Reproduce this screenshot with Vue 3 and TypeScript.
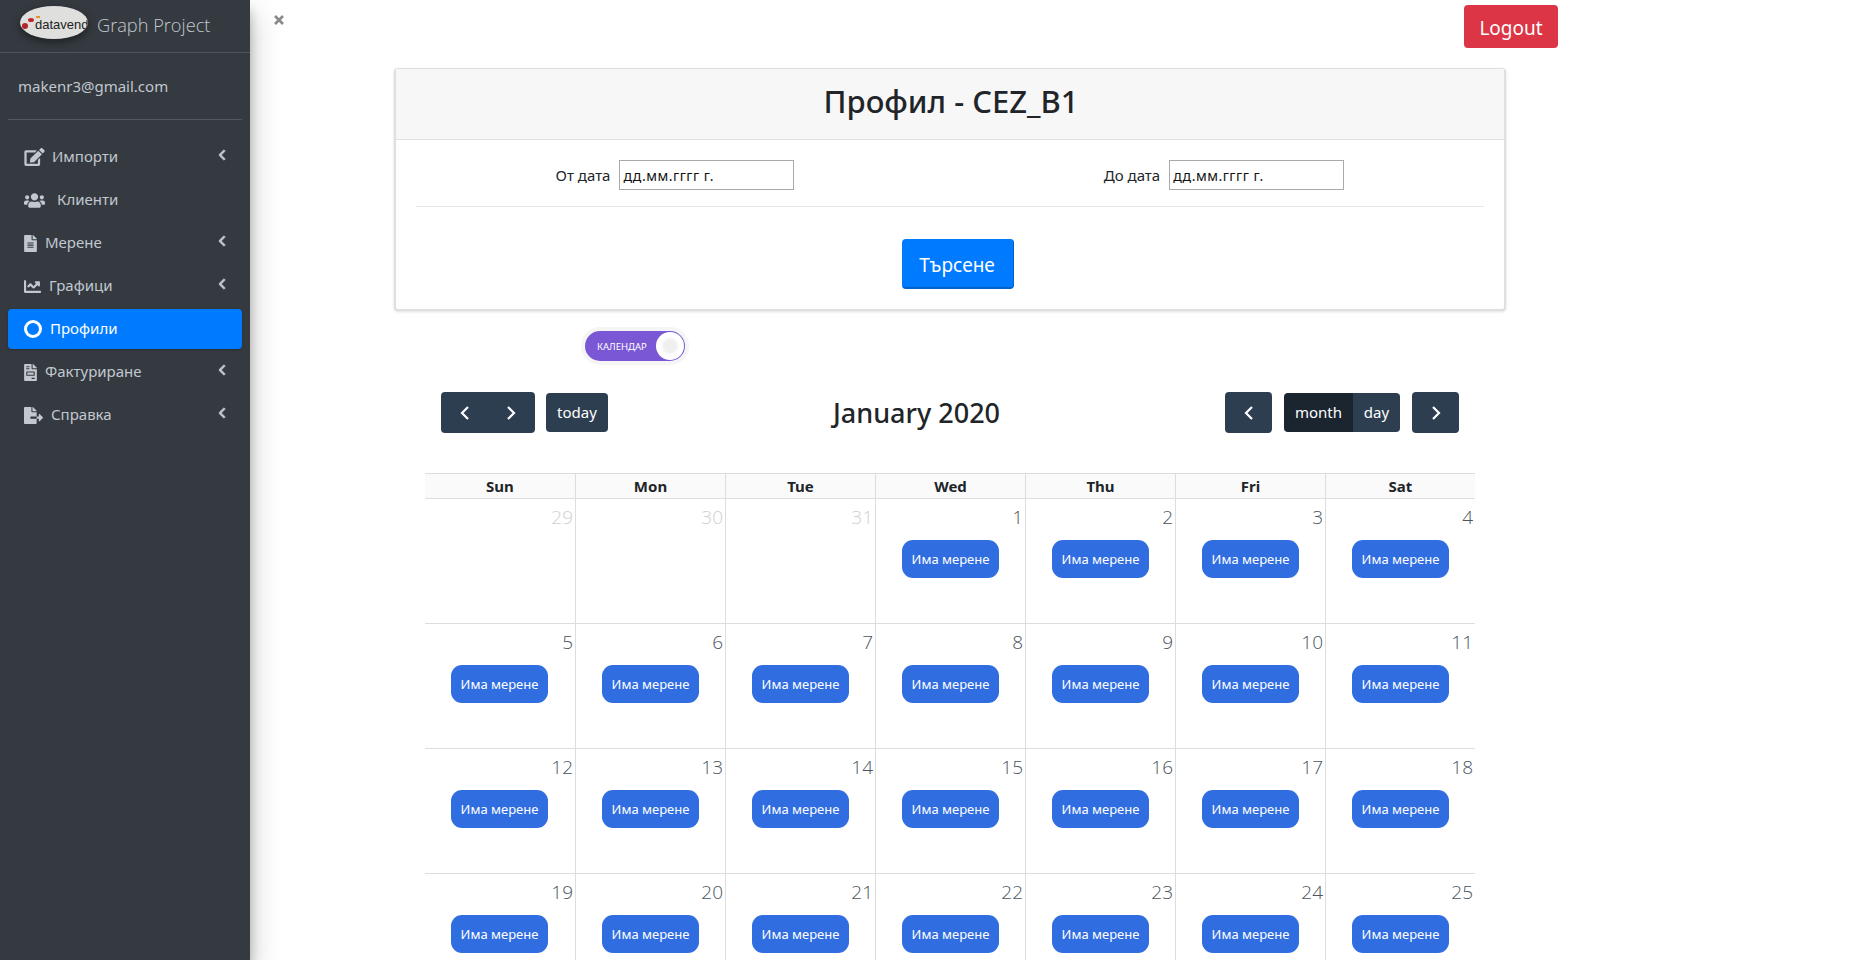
<script setup lang="ts">
type Nav = { label: string; icon: string; vb: string; w: number; h: number; gap: number; arrow: boolean; active?: boolean; ring?: boolean };

const chevL = 'M34.52 239.03L228.87 44.69c9.37-9.37 24.57-9.37 33.94 0l22.67 22.67c9.36 9.36 9.38 24.52.04 33.9L131.49 256l154.02 154.75c9.34 9.38 9.32 24.54-.04 33.9l-22.67 22.67c-9.37 9.37-24.57 9.37-33.94 0L34.52 272.97c-9.37-9.37-9.37-24.57 0-33.94z';

const fileAlt = 'M224 136V0H24C10.7 0 0 10.7 0 24v464c0 13.3 10.7 24 24 24h336c13.3 0 24-10.7 24-24V160H248c-13.2 0-24-10.8-24-24zm64 236c0 6.6-5.4 12-12 12H108c-6.6 0-12-5.4-12-12v-8c0-6.6 5.4-12 12-12h168c6.6 0 12 5.4 12 12v8zm0-64c0 6.6-5.4 12-12 12H108c-6.6 0-12-5.4-12-12v-8c0-6.6 5.4-12 12-12h168c6.6 0 12 5.4 12 12v8zm0-72v8c0 6.6-5.4 12-12 12H108c-6.6 0-12-5.4-12-12v-8c0-6.6 5.4-12 12-12h168c6.6 0 12 5.4 12 12zm96-114.1v6.1H256V0h6.1c6.4 0 12.5 2.5 17 7l97.9 98c4.5 4.5 7 10.6 7 16.9z';

const nav: Nav[] = [
  { label: 'Импорти', vb: '0 0 576 512', w: 21, h: 18, gap: 7, arrow: true, icon: 'M402.6 83.2l90.2 90.2c3.8 3.8 3.8 10 0 13.8L274.4 405.6l-92.8 10.3c-12.4 1.4-22.9-9.1-21.5-21.5l10.3-92.8L388.8 83.2c3.8-3.8 10-3.8 13.8 0zm162-22.9l-48.8-48.8c-15.2-15.2-39.9-15.2-55.2 0l-35.4 35.4c-3.8 3.8-3.8 10 0 13.8l90.2 90.2c3.8 3.8 10 3.8 13.8 0l35.4-35.4c15.2-15.3 15.2-40 0-55.2zM384 346.2V448H64V128h229.8c3.2 0 6.2-1.3 8.5-3.5l40-40c7.6-7.6 2.2-20.5-8.5-20.5H48C21.5 64 0 85.5 0 112v352c0 26.5 21.5 48 48 48h352c26.5 0 48-21.5 48-48V306.2c0-10.7-12.9-16-20.5-8.5l-40 40c-2.2 2.3-3.5 5.3-3.5 8.5z' },
  { label: 'Клиенти', vb: '0 0 640 512', w: 21, h: 17, gap: 12, arrow: false, icon: 'M96 224c35.3 0 64-28.7 64-64s-28.7-64-64-64-64 28.7-64 64 28.7 64 64 64zm448 0c35.3 0 64-28.7 64-64s-28.7-64-64-64-64 28.7-64 64 28.7 64 64 64zm32 32h-64c-17.6 0-33.5 7.1-45.1 18.6 40.3 22.1 68.9 62 75.1 109.4h66c17.7 0 32-14.3 32-32v-32c0-35.3-28.7-64-64-64zm-256 0c61.9 0 112-50.1 112-112S381.9 32 320 32 208 82.1 208 144s50.1 112 112 112zm76.8 32h-8.3c-20.8 10-43.9 16-68.5 16s-47.6-6-68.5-16h-8.3C179.6 288 128 339.6 128 403.2V432c0 26.5 21.5 48 48 48h288c26.5 0 48-21.5 48-48v-28.8c0-63.6-51.6-115.2-115.2-115.2zm-223.7-13.4C161.5 263.1 145.6 256 128 256H64c-35.3 0-64 28.7-64 64v32c0 17.7 14.3 32 32 32h65.9c6.3-47.4 34.9-87.3 75.2-109.4z' },
  { label: 'Мерене', vb: '0 0 384 512', w: 13, h: 17, gap: 8, arrow: true, icon: fileAlt },
  { label: 'Графици', vb: '0 0 512 512', w: 17, h: 17, gap: 8, arrow: true, icon: 'M496 384H64V80c0-8.84-7.16-16-16-16H16C7.16 64 0 71.16 0 80v336c0 17.67 14.33 32 32 32h464c8.84 0 16-7.16 16-16v-32c0-8.84-7.16-16-16-16zM464 96H345.94c-21.38 0-32.09 25.85-16.97 40.97l32.4 32.4L288 242.75l-73.37-73.37c-12.5-12.5-32.76-12.5-45.25 0l-68.69 68.69c-6.25 6.25-6.25 16.38 0 22.63l22.62 22.62c6.25 6.25 16.38 6.25 22.63 0L192 237.25l73.37 73.37c12.5 12.5 32.76 12.5 45.25 0l96-96 32.4 32.4c15.12 15.12 40.97 4.41 40.97-16.97V112c.01-8.84-7.15-16-15.99-16z' },
  { label: 'Профили', vb: '', w: 18, h: 18, gap: 8, arrow: false, active: true, ring: true, icon: '' },
  { label: 'Фактуриране', vb: '0 0 384 512', w: 13, h: 17, gap: 8, arrow: true, icon: 'M288 256H96v64h192v-64zm89-151L279.1 7c-4.5-4.5-10.6-7-17-7H256v128h128v-6.1c0-6.3-2.5-12.4-7-16.9zm-153 31V0H24C10.7 0 0 10.7 0 24v464c0 13.3 10.7 24 24 24h336c13.3 0 24-10.7 24-24V160H248c-13.2 0-24-10.8-24-24zM64 72c0-4.42 3.58-8 8-8h80c4.42 0 8 3.58 8 8v16c0 4.42-3.58 8-8 8H72c-4.42 0-8-3.58-8-8V72zm0 64c0-4.42 3.58-8 8-8h80c4.42 0 8 3.58 8 8v16c0 4.42-3.58 8-8 8H72c-4.42 0-8-3.58-8-8v-16zm256 304c0 4.42-3.58 8-8 8h-80c-4.42 0-8-3.58-8-8v-16c0-4.42 3.58-8 8-8h80c4.42 0 8 3.58 8 8v16zm0-200v96c0 8.84-7.16 16-16 16H80c-8.84 0-16-7.16-16-16v-96c0-8.84 7.16-16 16-16h224c8.84 0 16 7.16 16 16z' },
  { label: 'Справка', vb: '0 0 576 512', w: 19, h: 17, gap: 8, arrow: true, icon: 'M384 121.9c0-6.3-2.5-12.4-7-16.9L279.1 7c-4.5-4.5-10.6-7-17-7H256v128h128zM571 308l-95.7-96.4c-10.1-10.1-27.4-3-27.4 11.3V288h-64v64h64v65.2c0 14.3 17.3 21.4 27.4 11.3L571 332c6.6-6.6 6.6-17.4 0-24zm-379 28v-32c0-8.8 7.2-16 16-16h176V160H248c-13.2 0-24-10.8-24-24V0H24C10.7 0 0 10.7 0 24v464c0 13.3 10.7 24 24 24h336c13.3 0 24-10.7 24-24V352H208c-8.8 0-16-7.2-16-16z' },
];

const days = ['Sun', 'Mon', 'Tue', 'Wed', 'Thu', 'Fri', 'Sat'];

type Cell = { n: number; out: boolean };
const cells: Cell[] = [
  { n: 29, out: true }, { n: 30, out: true }, { n: 31, out: true },
  ...Array.from({ length: 25 }, (_, i) => ({ n: i + 1, out: false })),
];
</script>

<template>
  <div class="page">
    <aside class="sidebar">
      <div class="brand">
        <div class="logo">
          <span class="dot d1"></span><span class="dot d2"></span><span class="dot d3"></span>
          <span class="logo-text">datavend</span>
        </div>
        <span class="brand-name">Graph Project</span>
      </div>
      <div class="user">makenr3@gmail.com</div>
      <nav class="nav">
        <a v-for="item in nav" :key="item.label" class="nav-item" :class="{ active: item.active }">
          <span v-if="item.ring" class="ring"></span>
          <svg v-else class="nav-icon" :viewBox="item.vb" :width="item.w" :height="item.h" fill="currentColor"><path :d="item.icon" /></svg>
          <span class="nav-label" :style="{ marginLeft: item.gap + 'px' }">{{ item.label }}</span>
          <svg v-if="item.arrow" class="nav-arrow" viewBox="0 0 320 512" width="8" height="12" fill="currentColor" stroke="currentColor" stroke-width="30"><path :d="chevL" /></svg>
        </a>
      </nav>
    </aside>

    <main class="main">
      <div class="topbar">
        <svg class="close" viewBox="0 0 12 12" width="12" height="12"><path d="M2 2l8 8M10 2l-8 8" stroke="#8a8a8a" stroke-width="2.6" fill="none" /></svg>
        <button class="logout">Logout</button>
      </div>

      <div class="content">
        <section class="card">
          <header class="card-head"><h2>Профил - CEZ_B1</h2></header>
          <div class="card-body">
            <div class="filters">
              <label class="field first">От дата <input class="date" readonly value="дд.мм.гггг г." /></label>
              <label class="field second">До дата <input class="date" readonly value="дд.мм.гггг г." /></label>
            </div>
            <hr />
            <div class="search-row"><button class="search">Търсене</button></div>
          </div>
        </section>

        <div class="toggle-row">
          <div class="toggle">
            <span class="toggle-text">КАЛЕНДАР</span>
            <span class="knob"><span class="knob-in"></span></span>
          </div>
        </div>

        <section class="calendar">
          <div class="toolbar">
            <div class="tool-group left">
              <div class="btn-pair">
                <button class="cal-btn arrow-btn"><svg viewBox="0 0 12 16" width="12" height="16"><path d="M9 2L3 8l6 6" /></svg></button>
                <button class="cal-btn arrow-btn shift"><svg viewBox="0 0 12 16" width="12" height="16"><path d="M3 2l6 6-6 6" /></svg></button>
              </div>
              <button class="cal-btn text-btn">today</button>
            </div>
            <h2 class="cal-title">January 2020</h2>
            <div class="tool-group">
              <button class="cal-btn arrow-btn single"><svg viewBox="0 0 12 16" width="12" height="16"><path d="M9 2L3 8l6 6" /></svg></button>
              <div class="seg">
                <button class="seg-btn on">month</button>
                <button class="seg-btn">day</button>
              </div>
              <button class="cal-btn arrow-btn single"><svg viewBox="0 0 12 16" width="12" height="16"><path d="M3 2l6 6-6 6" /></svg></button>
            </div>
          </div>

          <div class="grid-head">
            <div v-for="d in days" :key="d" class="head-cell">{{ d }}</div>
          </div>
          <div class="grid-body">
            <div v-for="c in cells" :key="c.n + (c.out ? 'o' : '')" class="day">
              <div class="num" :class="{ out: c.out }">{{ c.n }}</div>
              <button v-if="!c.out" class="event">Има мерене</button>
            </div>
          </div>
        </section>
      </div>
    </main>
  </div>
</template>

<style>
html, body { margin: 0; padding: 0; background: #fff; overflow: hidden; }
</style>

<style scoped>
.page {
  display: flex;
  height: 960px;
  overflow: hidden;
  font-family: "Noto Sans", "Open Sans", sans-serif;
  color: #212529;
  background: #fff;
}
button { font-family: inherit; cursor: pointer; }

.sidebar {
  width: 250px;
  flex: none;
  background: #343a40;
  box-shadow: 0 14px 28px rgba(0,0,0,.25), 0 10px 10px rgba(0,0,0,.22);
  color: #c2c7d0;
  position: relative;
  z-index: 2;
}
.brand {
  height: 53px;
  box-sizing: border-box;
  border-bottom: 1px solid #4b545c;
  display: flex;
  align-items: center;
  padding: 0 0 3px 20px;
}
.logo {
  width: 68px;
  height: 33px;
  margin-top: 6px;
  align-self: flex-start;
  border-radius: 50%;
  background: #dfdfdd;
  box-shadow: 0 3px 8px rgba(0,0,0,.45);
  position: relative;
  overflow: hidden;
  flex: none;
}
.logo-text {
  position: absolute;
  left: 15px;
  top: 10px;
  font: 13px/18px "Liberation Sans", sans-serif;
  color: #222;
  white-space: nowrap;
}
.dot { position: absolute; border-radius: 50%; }
.d1 { left: 2px; top: 17px; width: 6px; height: 6px; background: #b3232c; }
.d2 { left: 8px; top: 12px; width: 6px; height: 4px; background: #c8262e; }
.d3 { left: 16px; top: 10px; width: 4px; height: 2px; border-radius: 0; background: #e8912c; }
.brand-name {
  margin-left: 9px;
  font-family: "Open Sans", "Noto Sans", sans-serif;
  font-size: 18.2px;
  font-weight: 300;
  color: #c4c8ce;
  white-space: nowrap;
}
.user {
  height: 67px;
  margin: 0 8px;
  padding-left: 10px;
  box-sizing: border-box;
  border-bottom: 1px solid #4f5962;
  display: flex;
  align-items: center;
  font-size: 15px;
  color: #c2c7d0;
}
.nav { padding: 17px 8px 0; display: flex; flex-direction: column; gap: 3px; }
.nav-item {
  height: 40px;
  display: flex;
  align-items: center;
  padding-left: 16px;
  border-radius: 4px;
  font-size: 15px;
  color: #c2c7d0;
  position: relative;
}
.nav-item.active { background: #007bff; color: #fff; box-shadow: 0 1px 3px rgba(0,0,0,.2); }
.nav-icon { flex: none; }
.nav-label { padding-bottom: 2px; }
.ring { width: 18px; height: 18px; box-sizing: border-box; border: 3px solid #fff; border-radius: 50%; flex: none; }
.nav-arrow { margin-left: auto; margin-right: 16px; margin-top: -4px; }

.main { flex: 1; min-width: 0; }
.topbar {
  width: 1308px;
  height: 68px;
  box-sizing: border-box;
  display: flex;
  justify-content: space-between;
  align-items: flex-start;
  padding-left: 23px;
}
.close { margin-top: 14px; }
.logout {
  margin-top: 5px;
  width: 94px;
  height: 43px;
  background: #dc3545;
  color: #fff;
  border: 0;
  border-radius: 4px;
  font-size: 19px;
  padding: 2px 0 0;
}

.content { margin-left: 144px; width: 1112px; }
.card {
  box-sizing: border-box;
  height: 243px;
  border: 2px solid #dfdfdf;
  border-top-width: 1px;
  border-radius: 4px;
  box-shadow: 0 1px 3px rgba(0,0,0,.12);
  background: #fff;
}
.card-head {
  height: 71px;
  box-sizing: border-box;
  background: #f7f7f7;
  border-bottom: 1px solid #dfdfdf;
  display: flex;
  align-items: center;
  justify-content: center;
  padding: 0 0 6px 2px;
}
.card-head h2 { margin: 0; font-size: 31px; font-weight: 500; color: #212529; }
.card-body { padding: 20px 20px 0; }
.filters { display: grid; grid-template-columns: 1fr 1fr; height: 30px; }
.field { display: flex; align-items: center; justify-content: center; gap: 9px; font-size: 15px; color: #212529; }
.field.first { padding-right: 16px; }
.field.second { padding-left: 14px; }
.date {
  width: 175px;
  height: 30px;
  box-sizing: border-box;
  border: 1px solid #a9a9a9;
  padding: 0 3px;
  font: 14px "Noto Sans", sans-serif;
  letter-spacing: .5px;
  color: #111;
  outline: none;
}
hr { margin: 16px 0 0; border: 0; border-top: 1px solid #e6e6e6; }
.search-row { display: flex; justify-content: center; padding: 32px 0 0 15px; }
.search {
  width: 112px;
  height: 50px;
  background: #007bff;
  color: #fff;
  border: 0;
  border-right: 1px solid #0062cc;
  border-bottom: 2px solid #0062cc;
  border-radius: 4px;
  font-size: 19px;
  padding: 4px 0 0;
}

.toggle-row { padding: 20px 0 0 191px; height: 80px; box-sizing: border-box; }
.toggle {
  width: 100px;
  height: 30px;
  box-sizing: border-box;
  background: #7957d5;
  border-radius: 15px;
  display: flex;
  align-items: center;
  justify-content: space-between;
  box-shadow: 0 0 0 4px #f5f5f5;
  padding-left: 12px;
  color: #fff;
}
.toggle-text { font-size: 9.5px; }
.knob {
  width: 28px;
  height: 28px;
  margin-right: 1px;
  background: #fff;
  border-radius: 50%;
  display: flex;
  align-items: center;
  justify-content: center;
}
.knob-in { width: 14px; height: 14px; border-radius: 50%; background: #f0f0f0; box-shadow: 0 0 5px #ececec; }

.calendar { margin-left: 31px; width: 1050px; padding-top: 1px; }
.toolbar {
  display: flex;
  justify-content: space-between;
  align-items: center;
  padding: 0 16px;
  height: 41px;
  margin-bottom: 40px;
}
.tool-group { display: flex; align-items: center; gap: 12px; }
.tool-group.left { gap: 11px; }
.cal-title { margin: 0; font-size: 27px; font-weight: 500; }
.btn-pair { display: flex; border-radius: 4px; overflow: hidden; }
.cal-btn { background: #2c3e50; border: 0; color: #fff; padding: 0; }
.arrow-btn { width: 47px; height: 41px; display: flex; align-items: center; justify-content: center; }
.arrow-btn.shift { padding-right: 2px; box-sizing: border-box; }
.arrow-btn svg path { stroke: #fff; stroke-width: 2.2; fill: none; }
.arrow-btn.single { border-radius: 4px; }
.text-btn { width: 62px; height: 39px; border-radius: 4px; font-size: 15px; padding-bottom: 2px; }
.seg { display: flex; border-radius: 4px; overflow: hidden; }
.seg-btn { height: 39px; width: 47px; background: #2c3e50; border: 0; color: #fff; font-size: 15px; padding: 0 0 2px; }
.seg-btn.on { width: 69px; background: #1a252f; }

.grid-head {
  display: grid;
  grid-template-columns: repeat(7, 150px);
  border-top: 1px solid #dddddd;
  border-bottom: 1px solid #dddddd;
  background: #fafafa;
}
.head-cell {
  height: 24px;
  line-height: 24px;
  text-align: center;
  font-size: 15px;
  font-weight: 700;
  color: #212529;
  border-left: 1px solid #dddddd;
  box-sizing: border-box;
}
.head-cell:first-child { border-left: 0; }
.grid-body { display: grid; grid-template-columns: repeat(7, 150px); grid-auto-rows: 125px; }
.day {
  box-sizing: border-box;
  border-left: 1px solid #dddddd;
  border-bottom: 1px solid #dddddd;
  display: flex;
  flex-direction: column;
  align-items: center;
  position: relative;
}
.day:nth-child(7n + 1) { border-left: 0; padding-right: 1px; }
.day:nth-child(7n + 1) .num { margin-right: -1px; }
.num {
  align-self: flex-end;
  height: 41px;
  line-height: 36px;
  padding-right: 2px;
  font-family: "Open Sans", "Noto Sans", sans-serif;
  font-size: 19px;
  font-weight: 300;
  color: #4a5560;
}
.num.out { color: #cfcfcf; }
.event {
  width: 97px;
  height: 38px;
  background: #2f6de1;
  color: #fff;
  border: 0;
  border-radius: 11px;
  font-size: 13px;
  padding: 0;
}
</style>
